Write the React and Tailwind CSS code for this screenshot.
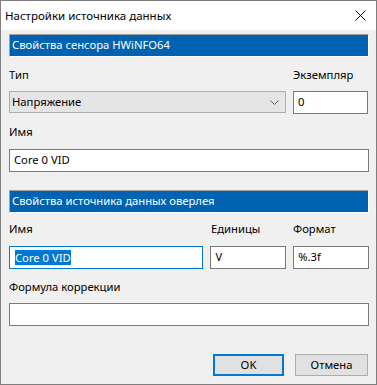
export default function App() {
  const font = { fontFamily: '"Noto Sans", "Open Sans", sans-serif' };
  return (
    <div className="w-[377px] h-[385px] bg-[#f0f0f0] border border-[#7f7f7f] flex flex-col text-[11.25px] text-black overflow-hidden" style={font}>
      {/* title bar */}
      <div className="h-[29px] bg-white flex items-center justify-between pl-[4px] pr-[10px] shrink-0">
        <span className="text-[11.5px] leading-none">Настройки источника данных</span>
        <svg width="11" height="11" viewBox="0 0 11 11">
          <path d="M0.5 0.5 L10.5 10.5 M10.5 0.5 L0.5 10.5" stroke="#000" strokeWidth="1" />
        </svg>
      </div>

      <div className="flex flex-col pl-[8px] pr-[7px]">
        {/* header 1 */}
        <div className="mt-[4px] h-[23px] border-t border-l border-t-[#a0a0a0] border-l-[#a0a0a0] border-b border-r border-b-white border-r-white bg-[#0063b1] text-white flex items-center pl-[2px]">
          Свойства сенсора HWiNFO64
        </div>

        <div className="flex mt-[10px] h-[16px] items-center">
          <span className="w-[284px]">Тип</span>
          <span>Экземпляр</span>
        </div>

        <div className="flex mt-[8px] gap-[7px]">
          <div className="w-[277px] h-[22px] bg-[#e5e5e5] border border-[#adadad] flex items-center justify-between pl-[2px] pr-[6px]">
            <span>Напряжение</span>
            <svg width="9" height="5" viewBox="0 0 9 5">
              <path d="M0.5 0.5 L4.5 4.5 L8.5 0.5" stroke="#606060" strokeWidth="1" fill="none" />
            </svg>
          </div>
          <div className="w-[75px] h-[23px] bg-white border border-[#7a7a7a] flex items-center pl-[4px]">0</div>
        </div>

        <div className="mt-[10px] h-[16px] flex items-center">Имя</div>

        <div className="mt-[9px] h-[23px] bg-white border border-[#7a7a7a] flex items-center pl-[4px]">Core 0 VID</div>

        {/* header 2 */}
        <div className="mt-[18px] h-[23px] border-t border-l border-t-[#a0a0a0] border-l-[#a0a0a0] border-b border-r border-b-white border-r-white bg-[#0063b1] text-white flex items-center pl-[2px]">
          Свойства источника данных оверлея
        </div>

        <div className="flex mt-[8px] h-[16px] items-center">
          <span className="w-[202px]">Имя</span>
          <span className="w-[82px]">Единицы</span>
          <span>Формат</span>
        </div>

        <div className="flex mt-[9px] gap-[7px]">
          <div className="w-[195px] h-[23px] bg-white border border-[#0078d7] flex items-center pl-[5px]">
            <span className="bg-[#0078d7] text-white leading-[15px]">Core 0 VID</span>
          </div>
          <div className="w-[76px] h-[23px] bg-white border border-[#7a7a7a] flex items-center pl-[4px]">V</div>
          <div className="w-[76px] h-[23px] bg-white border border-[#7a7a7a] flex items-center pl-[4px]">%.3f</div>
        </div>

        <div className="mt-[10px] h-[16px] flex items-center">Формула коррекции</div>

        <div className="mt-[8px] h-[23px] bg-white border border-[#7a7a7a]"></div>

        <div className="flex justify-end gap-[11px] mt-[28px] pr-[1px]">
          <button className="w-[71px] h-[22px] bg-[#e1e1e1] border-2 border-[#0078d7] flex items-center justify-center">OK</button>
          <button className="w-[73px] h-[22px] bg-[#e1e1e1] border border-[#adadad] flex items-center justify-center">Отмена</button>
        </div>
      </div>
    </div>
  );
}
